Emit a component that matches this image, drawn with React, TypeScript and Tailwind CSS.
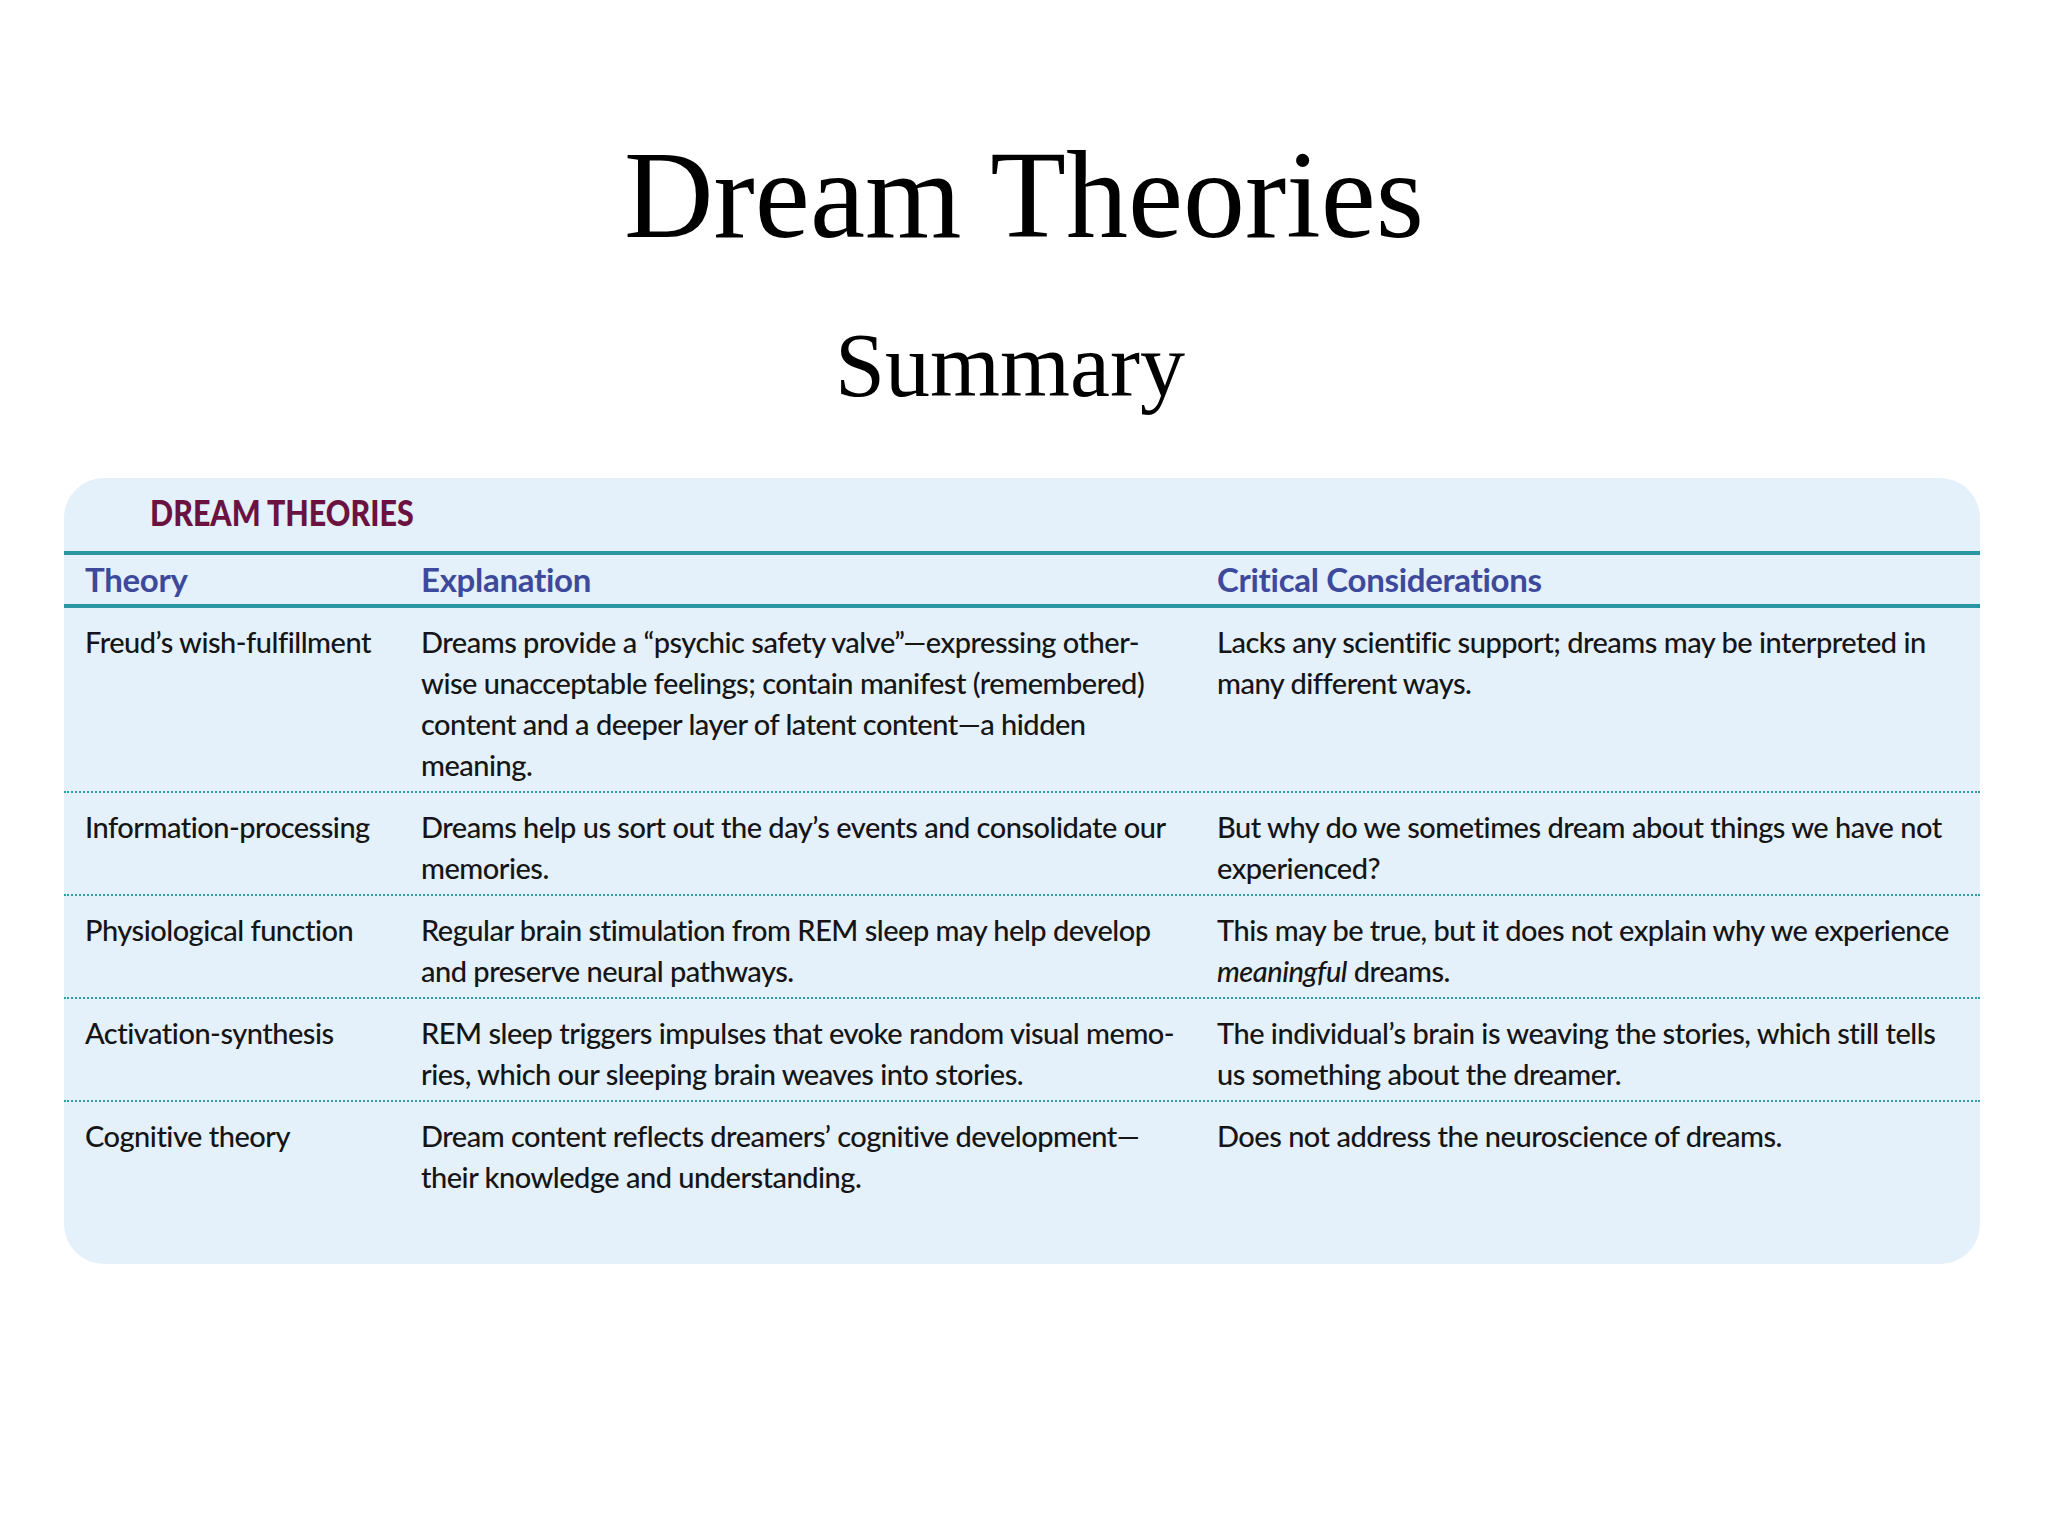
import React from "react";

type Row = {
  theory: string;
  explanation: React.ReactNode[];
  critical: React.ReactNode[];
};

const rows: Row[] = [
  {
    theory: "Freud\u2019s wish-fulfillment",
    explanation: [
      "Dreams provide a \u201Cpsychic safety valve\u201D\u2014expressing other-",
      "wise unacceptable feelings; contain manifest (remembered)",
      "content and a deeper layer of latent content\u2014a hidden",
      "meaning.",
    ],
    critical: [
      "Lacks any scientific support; dreams may be interpreted in",
      "many different ways.",
    ],
  },
  {
    theory: "Information-processing",
    explanation: [
      "Dreams help us sort out the day\u2019s events and consolidate our",
      "memories.",
    ],
    critical: [
      "But why do we sometimes dream about things we have not",
      "experienced?",
    ],
  },
  {
    theory: "Physiological function",
    explanation: [
      "Regular brain stimulation from REM sleep may help develop",
      "and preserve neural pathways.",
    ],
    critical: [
      "This may be true, but it does not explain why we experience",
      <>
        <span className="italic">meaningful</span> dreams.
      </>,
    ],
  },
  {
    theory: "Activation-synthesis",
    explanation: [
      "REM sleep triggers impulses that evoke random visual memo-",
      "ries, which our sleeping brain weaves into stories.",
    ],
    critical: [
      "The individual\u2019s brain is weaving the stories, which still tells",
      "us something about the dreamer.",
    ],
  },
  {
    theory: "Cognitive theory",
    explanation: [
      "Dream content reflects dreamers\u2019 cognitive development\u2014",
      "their knowledge and understanding.",
    ],
    critical: ["Does not address the neuroscience of dreams."],
  },
];

function Lines({ lines }: { lines: React.ReactNode[] }) {
  return (
    <div>
      {lines.map((l, i) => (
        <div key={i} className="whitespace-nowrap">
          {l}
        </div>
      ))}
    </div>
  );
}

export default function App() {
  return (
    <div className="w-[2048px] h-[1536px] bg-white overflow-hidden">
      <div className="pt-[134px] text-center text-black font-['Liberation_Serif',serif]">
        <h1 className="text-[124px] leading-none">Dream Theories</h1>
        <h2 className="mt-[63px] pr-[28px] text-[90px] leading-none">Summary</h2>
      </div>

      <div className="mt-[67px] ml-[64px] w-[1916px] h-[786px] rounded-[40px] bg-[#e4f0fa] overflow-hidden font-['Lato','Liberation_Sans',sans-serif]">
        <div className="h-[73px] pl-[86px] pt-[16px]">
          <span className="inline-block origin-left scale-x-[0.845] text-[36px] leading-none font-black text-[#6b1240] whitespace-nowrap">
            DREAM THEORIES
          </span>
        </div>
        <div className="border-y-[4px] border-[#2a96a2] grid grid-cols-[336px_796px_1fr] pl-[21px] h-[57px] items-center text-[33px] font-bold tracking-[-0.3px] text-[#3d4a9c] leading-[49px]">
          <div>Theory</div>
          <div>Explanation</div>
          <div>Critical Considerations</div>
        </div>
        {rows.map((r, i) => (
          <div
            key={i}
            className={
              i < rows.length - 1
                ? "grid grid-cols-[336px_796px_1fr] pl-[21px] pt-[13px] pb-[6px] border-b-2 border-dotted border-[#2f9fa6] text-[29px] leading-[41px] tracking-[-0.5px] font-medium text-[#151515]"
                : "grid grid-cols-[336px_796px_1fr] pl-[21px] pt-[13px] pb-[6px] text-[29px] leading-[41px] tracking-[-0.5px] font-medium text-[#151515]"
            }
          >
            <div className="whitespace-nowrap">{r.theory}</div>
            <Lines lines={r.explanation} />
            <Lines lines={r.critical} />
          </div>
        ))}
      </div>
    </div>
  );
}
